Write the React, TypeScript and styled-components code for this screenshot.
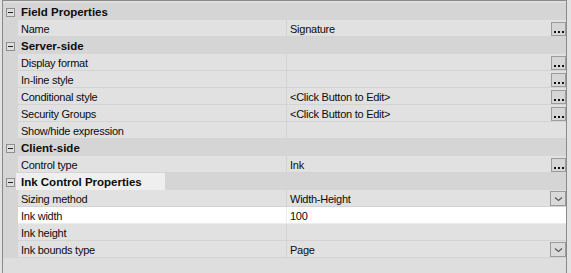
import React from "react";
import styled, { createGlobalStyle } from "styled-components";

const Global = createGlobalStyle`
  html, body { margin: 0; padding: 0; }
  body {
    background: #e2e2e2;
    font-family: "Liberation Sans", Arial, sans-serif;
    width: 571px;
    height: 273px;
    overflow: hidden;
  }
`;

const Frame = styled.div`
  box-sizing: border-box;
  margin-left: 2px;
  width: 565px;
  height: 273px;
  border-top: 1px solid #8a8a8a;
  border-left: 1px solid #8a8a8a;
  border-right: 1px solid #8a8a8a;
  background: #dedede;
  padding-top: 2px;
  display: flex;
  flex-direction: column;
`;

const Category = styled.div`
  display: flex;
  align-items: stretch;
  height: 17px;
  background: #d5d5d5;
`;

const ToggleCell = styled.div`
  width: 13px;
  display: flex;
  align-items: flex-start;
  padding-left: 3px;
  padding-top: 5px;
  box-sizing: border-box;
`;

const Toggle = styled.div`
  box-sizing: border-box;
  width: 9px;
  height: 9px;
  border: 1px solid #8e8e8e;
  background: #dedede;
  display: flex;
  align-items: center;
  justify-content: center;
  &::after {
    content: "";
    width: 5px;
    height: 1px;
    background: #222;
  }
`;

const CategoryLabel = styled.div<{ $hl?: boolean }>`
  padding-left: 5px;
  width: ${(p) => (p.$hl ? "149px" : "auto")};
  box-sizing: border-box;
  background: ${(p) => (p.$hl ? "#efefef" : "transparent")};
  font-weight: bold;
  font-size: 11.5px;
  line-height: 16px;
  padding-top: 1px;
  color: #0c0c0c;
`;

const Row = styled.div`
  display: grid;
  grid-template-columns: 15px 268px 1px 1fr;
  height: 17px;
  background: #d5d5d5;
`;

const Cell = styled.div<{ $sel?: boolean }>`
  box-sizing: border-box;
  height: 17px;
  background: ${(p) => (p.$sel ? "#ffffff" : "#e1e1e1")};
  border-bottom: 1px solid ${(p) => (p.$sel ? "#ececec" : "#d3d3d3")};
  padding-left: 3px;
  font-size: 11px;
  letter-spacing: -0.25px;
  line-height: 16px;
  color: #0c0c0c;
  display: flex;
  align-items: flex-start;
  white-space: nowrap;
`;

const Divider = styled.div<{ $sel?: boolean }>`
  background: ${(p) => (p.$sel ? "#ececec" : "#d3d3d3")};
`;

const Text = styled.span`
  flex: 1;
  padding-top: 1px;
`;

const DotsButton = styled.div`
  box-sizing: border-box;
  width: 15px;
  height: 14px;
  margin-top: 2px;
  border: 1px solid #9c9c9c;
  background: #d6d6d6;
  display: flex;
  align-items: flex-end;
  justify-content: center;
  gap: 2px;
  padding-bottom: 2px;
  padding-left: 1px;
`;

const Dot = styled.span`
  width: 2px;
  height: 2px;
  background: #111;
`;

const DropButton = styled.div`
  box-sizing: border-box;
  width: 16px;
  height: 15px;
  margin-top: 1px;
  border: 1px solid #9a9a9a;
  background: #dadada;
  display: flex;
  align-items: center;
  justify-content: center;
`;

const Bottom = styled.div`
  flex: 1;
  background: #dedede;
`;

type Btn = "dots" | "drop" | undefined;

const Dots = () => (
  <DotsButton>
    <Dot />
    <Dot />
    <Dot />
  </DotsButton>
);

const Drop = () => (
  <DropButton>
    <svg width="9" height="6" viewBox="0 0 9 6">
      <path d="M1 1.5 L4.5 4.5 L8 1.5" fill="none" stroke="#555" strokeWidth="1.1" />
    </svg>
  </DropButton>
);

const Prop = ({ name, value, btn, sel }: { name: string; value?: string; btn?: Btn; sel?: boolean }) => (
  <Row>
    <div />
    <Cell $sel={sel}>
      <Text>{name}</Text>
    </Cell>
    <Divider $sel={sel} />
    <Cell $sel={sel}>
      <Text>{value}</Text>
      {btn === "dots" && <Dots />}
      {btn === "drop" && <Drop />}
    </Cell>
  </Row>
);

const Cat = ({ label, hl }: { label: string; hl?: boolean }) => (
  <Category>
    <ToggleCell>
      <Toggle />
    </ToggleCell>
    <CategoryLabel $hl={hl}>{label}</CategoryLabel>
  </Category>
);

export default function App() {
  return (
    <>
      <Global />
      <Frame>
        <Cat label="Field Properties" />
        <Prop name="Name" value="Signature" btn="dots" />
        <Cat label="Server-side" />
        <Prop name="Display format" btn="dots" />
        <Prop name="In-line style" btn="dots" />
        <Prop name="Conditional style" value="<Click Button to Edit>" btn="dots" />
        <Prop name="Security Groups" value="<Click Button to Edit>" btn="dots" />
        <Prop name="Show/hide expression" />
        <Cat label="Client-side" />
        <Prop name="Control type" value="Ink" btn="dots" />
        <Cat label="Ink Control Properties" hl />
        <Prop name="Sizing method" value="Width-Height" btn="drop" />
        <Prop name="Ink width" value="100" sel />
        <Prop name="Ink height" />
        <Prop name="Ink bounds type" value="Page" btn="drop" />
        <Bottom />
      </Frame>
    </>
  );
}
